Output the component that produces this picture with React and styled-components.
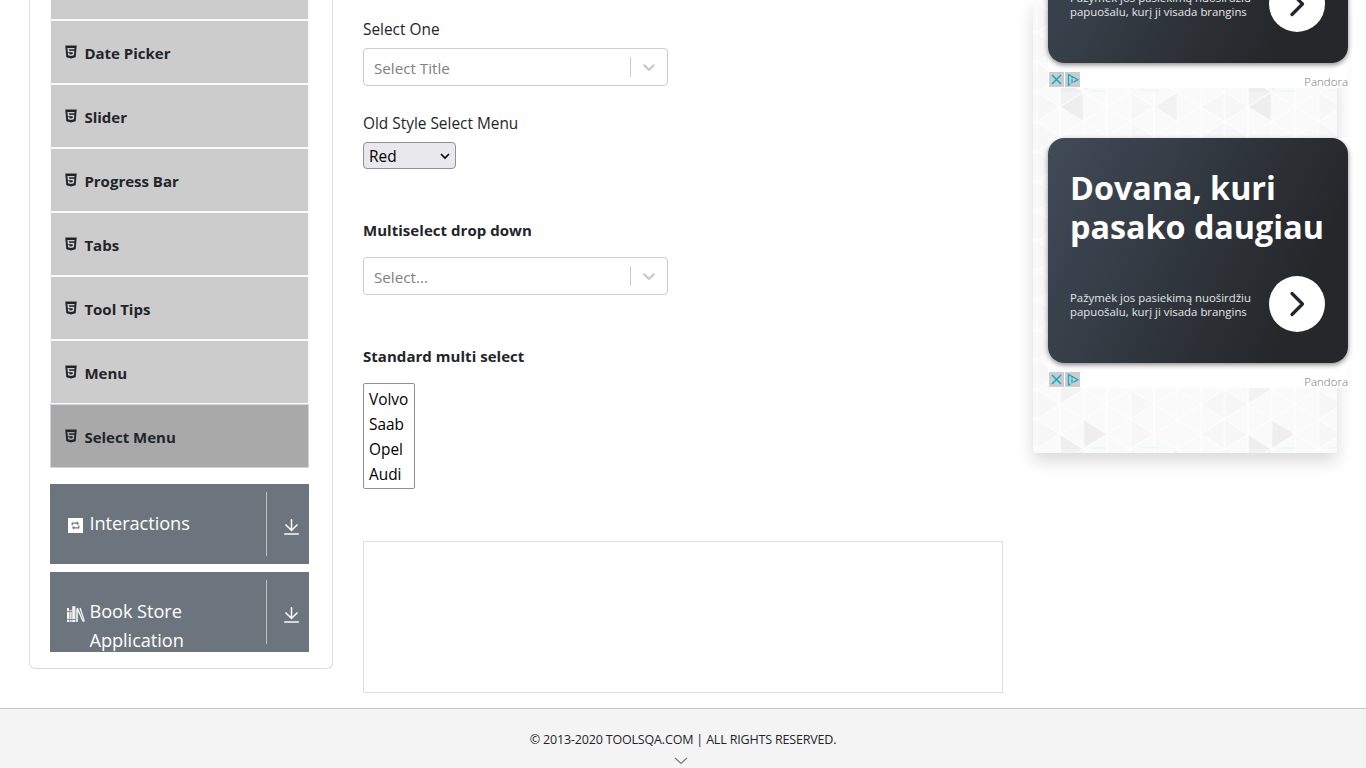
import React from "react";
import styled, { createGlobalStyle } from "styled-components";
import { AiFillHtml5 } from "react-icons/ai";

const GlobalStyle = createGlobalStyle`
  * { box-sizing: border-box; }
  html, body { margin: 0; padding: 0; background: #fff; }
  body {
    font-family: "Open Sans", "Noto Sans", sans-serif;
    font-size: 15.4px;
    line-height: 24px;
    color: #212529;
  }
`;

const Page = styled.div`
  width: 1366px;
  height: 768px;
  overflow: hidden;
  display: flex;
  flex-direction: column;
`;

const Columns = styled.div`
  display: flex;
  align-items: flex-start;
  height: 708px;
  flex: none;
  padding-left: 29px;
`;

const Sidebar = styled.aside`
  width: 304px;
  height: 669px;
  padding: 0 23px 16px 20px;
  border: 1px solid #dcdcdc;
  border-top: 0;
  border-radius: 0 0 6px 6px;
  display: flex;
  flex-direction: column;
`;

const MenuList = styled.ul`
  list-style: none;
  margin: 0 0 16px;
  padding: 0;
  width: 259px;
`;

const MenuItem = styled.li`
  display: flex;
  align-items: center;
  height: ${(p) => (p.$cut ? 20 : 64)}px;
  padding: 2px 0 0 12px;
  border: 1px solid ${(p) => (p.$active ? "#ced4da" : "#f8f9fa")};
  border-top-width: ${(p) => (p.$cut ? 0 : 1)}px;
  background: ${(p) => (p.$active ? "#a9a9a9" : "#ccc")};
  font-size: 15px;
  font-weight: 700;

  svg { margin: -2px 5.4px 0 0; flex: none; }
`;

const GroupHeader = styled.div`
  flex: none;
  display: flex;
  width: 259px;
  height: 80px;
  overflow: hidden;
  background: #6c757d;
  color: #fff;
  font-size: 18.2px;
  letter-spacing: -0.06px;
  line-height: 29px;

  & + & { margin-top: 8px; }
`;

const GroupTitle = styled.div`
  display: flex;
  width: 216px;
  padding: 25px 0 0 16px;

  svg { flex: none; margin: 8px 4.5px 0 0; }
`;

const GroupToggle = styled.div`
  width: 43px;
  height: 64px;
  margin-top: 8px;
  padding: 26px 0 0 17px;
  border-left: 1px solid #c3bfbb;

  svg { display: block; }
`;

const Main = styled.main`
  width: 640px;
  margin-left: 30px;
  padding-top: 17px;
`;

const Label = styled.div`
  height: 24px;
  padding-top: ${(p) => (p.$bold ? 0 : 1)}px;
  font-size: ${(p) => (p.$bold ? 15 : 15.4)}px;
  letter-spacing: ${(p) => (p.$bold ? 0.04 : 0)}px;
  font-weight: ${(p) => (p.$bold ? 700 : 400)};
  margin-bottom: ${(p) => p.$gap}px;
`;

const Dropdown = styled.div`
  display: flex;
  align-items: center;
  width: 305px;
  height: 38px;
  margin-bottom: ${(p) => p.$gap}px;
  border: 1px solid #ccc;
  border-radius: 4px;
  color: #808080;
`;

const Placeholder = styled.span`
  flex: 1;
  padding: 1px 0 0 10px;
  font-size: 15.2px;
`;

const Indicator = styled.span`
  display: flex;
  align-items: center;
  height: 20px;
  padding: 0 8px;
  border-left: 1px solid #ccc;
  color: #ccc;
`;

const NativeSelect = styled.div`
  display: flex;
  align-items: center;
  justify-content: space-between;
  width: 93px;
  height: 27px;
  margin-bottom: 49px;
  padding: 2px 5px 0;
  border: 1px solid #8f8f9d;
  border-radius: 4px;
  background: #e9e9ed;
  color: #000;

  svg { margin-top: -1px; }
`;

const ListBox = styled.ul`
  list-style: none;
  width: 52px;
  height: 106px;
  margin: 0 0 52px;
  padding: 3px 5px;
  border: 1px solid #8f8f9d;
  border-radius: 2px;
  color: #000;
  line-height: 25px;
`;

const EmptyBanner = styled.div`
  height: 152px;
  border: 1px solid #dedede;
`;

const AdPanel = styled.aside`
  position: relative;
  width: 304px;
  height: 453px;
  margin-left: 30px;
  padding-left: 15px;
  box-shadow: 0 8px 16px rgba(0, 0, 0, 0.15);
`;

const PanelTexture = styled.svg`
  position: absolute;
  inset: 0;
  width: 304px;
  height: 453px;
`;

const Ad = styled.section`
  position: relative;
  width: 300px;
  height: 250px;
  margin-top: ${(p) => p.$top}px;
  background: #fff;
`;

const AdCard = styled.div`
  height: 225px;
  padding: 30px 22px 0;
  border-radius: 16px;
  background: linear-gradient(116deg, #414b56 0%, #363e48 30%, #2b2f34 62%, #25272b 80%, #25272b 100%);
  box-shadow: 0 2px 5px rgba(0, 0, 0, 0.45);
  color: #fff;
`;

const AdTitle = styled.h2`
  margin: 0;
  font-size: 32.3px;
  font-weight: 700;
  line-height: 39px;
  white-space: nowrap;
`;

const AdBody = styled.div`
  display: flex;
  justify-content: space-between;
  margin: 30px 1px 0 0;
`;

const AdCopy = styled.p`
  margin: 15px 0 0;
  font-size: 11.4px;
  line-height: 14px;
  color: #e4e6e8;
  white-space: nowrap;
`;

const AdButton = styled.span`
  flex: none;
  display: grid;
  place-items: center;
  width: 56px;
  height: 56px;
  border-radius: 50%;
  background: #fff;
`;

const AdFooter = styled.div`
  display: flex;
  justify-content: space-between;
  height: 25px;
  padding: 9px 0 0 1px;
`;

const AdMarks = styled.div`
  display: flex;
  gap: 1px;
  height: 15px;

  svg { background: #ccc; }
`;

const Advertiser = styled.span`
  font-size: 11.5px;
  font-weight: 300;
  line-height: 20px;
  color: #777;
`;

const Footer = styled.footer`
  display: flex;
  flex-direction: column;
  align-items: center;
  height: 60px;
  flex: none;
  padding-top: 19px;
  border-top: 1px solid #c8c8c8;
  background: #f4f4f4;
  font-size: 12.5px;

  svg { margin: 4px 4px 0 0; }
`;

const Copyright = styled.span`
  height: 25px;
  letter-spacing: -0.17px;
  white-space: nowrap;
`;

const Texture = () => (
  <PanelTexture viewBox="0 0 304 453">
    <defs>
      <pattern id="triangles" x="3.5" y="92" width="188" height="178.5" patternUnits="userSpaceOnUse">
        <rect width="188" height="178.5" fill="#fafafa" />
        <g fill="#f7f7f7">
          {[0, 1, 2, 3, 4, 5].map((r) => (
            <path
              key={r}
              d={`M0 ${r * 29.75}v29.75l23.5-14.875zM94 ${r * 29.75}v29.75l23.5-14.875zM188 ${r * 29.75}v29.75l-23.5-14.875z`}
            />
          ))}
        </g>
        <path
          fill="#eeeeee"
          d="M23.5 14.875L47 0v29.75zM47 148.75v29.75l23.5-14.875zM23.5 163.625v29.75L47 178.5z"
        />
        <path fill="#f2f2f2" d="M23.5-14.875v29.75L47 0zM23.5 104.125v29.75L47 119zM117.5 14.875L141 0v29.75z" />
        <g stroke="#fff" strokeWidth="1" fill="none">
          {[0, 1, 2, 3, 4, 5, 6, 7, 8].map((c) => (
            <path key={c} d={`M${c * 23.5} 0v178.5`} />
          ))}
          {[-1, 0, 1, 2, 3, 4, 5, 6].map((r) => (
            <path
              key={r}
              d={`M0 ${r * 29.75}l23.5 14.875l23.5-14.875l23.5 14.875l23.5-14.875l23.5 14.875l23.5-14.875l23.5 14.875l23.5-14.875M0 ${r * 29.75}l23.5-14.875l23.5 14.875l23.5-14.875l23.5 14.875l23.5-14.875l23.5 14.875l23.5-14.875l23.5 14.875`}
            />
          ))}
        </g>
        <path stroke="#e2fbfb" strokeWidth="1.5" d="M55 177.5h15M104 177h18" />
      </pattern>
    </defs>
    <rect width="304" height="453" fill="url(#triangles)" />
  </PanelTexture>
);

const Chevron = () => (
  <svg width="20" height="20" viewBox="0 0 20 20" fill="currentColor">
    <path d="M4.516 7.548c0.436-0.446 1.043-0.481 1.576 0l3.908 3.747 3.908-3.747c0.533-0.481 1.141-0.446 1.574 0 0.436 0.445 0.408 1.197 0 1.615-0.406 0.418-4.695 4.502-4.695 4.502-0.217 0.223-0.502 0.335-0.787 0.335s-0.57-0.112-0.789-0.335c0 0-4.287-4.084-4.695-4.502s-0.436-1.17 0-1.615z" />
  </svg>
);

const LoopIcon = () => (
  <svg width="19" height="17" viewBox="0 0 19 17">
    <path fill="#fff" d="M2 1h15v15H2z" />
    <g fill="none" stroke="#6c757d" strokeWidth="1.2">
      <path d="M6.200 8.500V6.200h5.500M12.800 8.500v2.300H7.300" />
    </g>
    <path fill="#6c757d" d="M10.800 4.200l2.200 2-2.200 2zM8.200 8.800l-2.200 2 2.200 2z" />
  </svg>
);

const BooksIcon = () => (
  <svg width="19" height="18" viewBox="0 0 19 18" fill="#fff">
    <path d="M1 3h2v14H1z" />
    <path opacity=".75" d="M3.4 5h2.4v12H3.4zM10 4.5h2V17h-2z" />
    <path d="M6.2 1.2h3.2V17H6.2z" opacity=".9" />
    <path d="M10.4 3.2l1.500-.5L17.800 16.600l-1 .5zM13.500 3.200l1.200-.5 4.200 13.600-.9.4z" />
    <path stroke="#6c757d" strokeWidth=".8" d="M1 6.500h5M1 14.500h8.500" />
  </svg>
);

const ArrowDownIcon = () => (
  <svg width="16" height="18" viewBox="0 0 16 18" fill="none" stroke="#fff">
    <path strokeWidth="1.500" d="M7.500 1v11M1.500 6.500l6 6 6-6" />
    <path strokeWidth="1.800" stroke="#e2e5e9" d="M.2 16h14.600" />
  </svg>
);

const Advert = ({ top }) => (
  <Ad $top={top}>
    <AdCard>
      <AdTitle>
        Dovana, kuri
        <br />
        pasako daugiau
      </AdTitle>
      <AdBody>
        <AdCopy>
          Pažymėk jos pasiekimą nuoširdžiu
          <br />
          papuošalu, kurį ji visada brangins
        </AdCopy>
        <AdButton>
          <svg width="16" height="26" viewBox="0 0 16 26" fill="none" stroke="#20272d" strokeWidth="3.200" strokeLinecap="round" strokeLinejoin="round">
            <path d="M3 2.500L13.500 13 3 23.500" />
          </svg>
        </AdButton>
      </AdBody>
    </AdCard>
    <AdFooter>
      <AdMarks>
        <svg width="15" height="15" viewBox="0 0 15 15">
          <path stroke="#00aecd" strokeWidth="1.500" d="M3 3l9 9M12 3l-9 9" />
        </svg>
        <svg width="15" height="15" viewBox="0 0 15 15" fill="none" stroke="#00aecd" strokeWidth="1.300">
          <path d="M5.500 12L3.500 13V2.500L12.800 7.700 8.500 10.300M7 6.800v4.400M7 4.700v1.200" />
        </svg>
      </AdMarks>
      <Advertiser>Pandora</Advertiser>
    </AdFooter>
  </Ad>
);

const ITEMS = ["Date Picker", "Slider", "Progress Bar", "Tabs", "Tool Tips", "Menu", "Select Menu"];

export default function App() {
  return (
    <Page>
      <GlobalStyle />
      <Columns>
        <Sidebar>
          <MenuList>
            <MenuItem $cut />
            {ITEMS.map((name) => (
              <MenuItem key={name} $active={name === "Select Menu"}>
                <AiFillHtml5 size={16} />
                {name}
              </MenuItem>
            ))}
          </MenuList>
          <GroupHeader>
            <GroupTitle>
              <LoopIcon />
              <span>Interactions</span>
            </GroupTitle>
            <GroupToggle>
              <ArrowDownIcon />
            </GroupToggle>
          </GroupHeader>
          <GroupHeader>
            <GroupTitle>
              <BooksIcon />
              <span>
                Book Store
                <br />
                Application
              </span>
            </GroupTitle>
            <GroupToggle>
              <ArrowDownIcon />
            </GroupToggle>
          </GroupHeader>
        </Sidebar>
        <Main>
          <Label $gap={7}>Select One</Label>
          <Dropdown $gap={25}>
            <Placeholder>Select Title</Placeholder>
            <Indicator>
              <Chevron />
            </Indicator>
          </Dropdown>
          <Label $gap={7}>Old Style Select Menu</Label>
          <NativeSelect>
            Red
            <svg width="10" height="7" viewBox="0 0 10 7" fill="none" stroke="#000" strokeWidth="1.600">
              <path d="M1 1l4 4 4-4" />
            </svg>
          </NativeSelect>
          <Label $bold $gap={15}>Multiselect drop down</Label>
          <Dropdown $gap={49}>
            <Placeholder>Select...</Placeholder>
            <Indicator>
              <Chevron />
            </Indicator>
          </Dropdown>
          <Label $bold $gap={15}>Standard multi select</Label>
          <ListBox>
            <li>Volvo</li>
            <li>Saab</li>
            <li>Opel</li>
            <li>Audi</li>
          </ListBox>
          <EmptyBanner />
        </Main>
        <AdPanel>
          <Texture />
          <Advert top={-162} />
          <Advert top={50} />
        </AdPanel>
      </Columns>
      <Footer>
        <Copyright>© 2013-2020 TOOLSQA.COM | ALL RIGHTS RESERVED.</Copyright>
        <svg width="14" height="8" viewBox="0 0 14 8" fill="none" stroke="#777" strokeWidth="1.100">
          <path d="M1 1l6 5.500L13 1" />
        </svg>
      </Footer>
    </Page>
  );
}
